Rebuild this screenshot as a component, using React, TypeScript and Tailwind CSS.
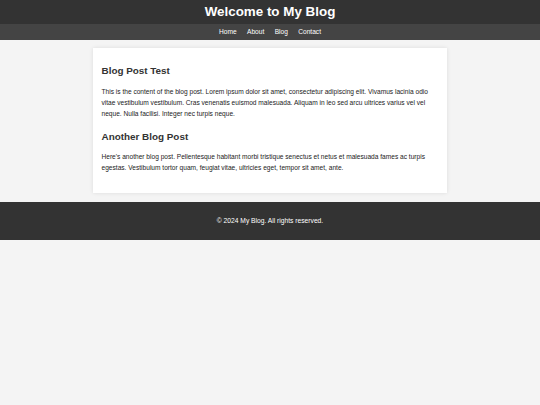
const NAV = ["Home", "About", "Blog", "Contact"];

const POSTS = [
  {
    title: "Blog Post Test",
    body: "This is the content of the blog post. Lorem ipsum dolor sit amet, consectetur adipiscing elit. Vivamus lacinia odio vitae vestibulum vestibulum. Cras venenatis euismod malesuada. Aliquam in leo sed arcu ultrices varius vel vel neque. Nulla facilisi. Integer nec turpis neque.",
  },
  {
    title: "Another Blog Post",
    body: "Here's another blog post. Pellentesque habitant morbi tristique senectus et netus et malesuada fames ac turpis egestas. Vestibulum tortor quam, feugiat vitae, ultricies eget, tempor sit amet, ante.",
  },
];

export default function App() {
  return (
    <div className="min-h-screen bg-[#f4f4f4] font-['Liberation_Sans',Arial,sans-serif] text-[#333]">
      {/* Header */}
      <header className="bg-[#333] h-[24px] flex items-center justify-center">
        <h1 className="text-white text-[13.4px] leading-none font-bold">Welcome to My Blog</h1>
      </header>

      {/* Nav */}
      <nav className="bg-[#444] h-[16px] flex items-center justify-center gap-[10.4px]">
        {NAV.map((item) => (
          <a key={item} className="text-white text-[6.6px] leading-none">
            {item}
          </a>
        ))}
      </nav>

      {/* Posts */}
      <main className="w-[354px] mx-auto mt-[8px] bg-white shadow-[0_0_4px_rgba(0,0,0,0.1)] pt-[17px] pb-[20px] px-[8.5px]">
        {POSTS.map((post, i) => (
          <article key={post.title} className={i > 0 ? "mt-[12px]" : ""}>
            <h2 className="text-[9.9px] leading-[12px] font-bold text-[#333] mb-[8.5px]">{post.title}</h2>
            <p className="text-[6.6px] leading-[11px] text-[#222]">{post.body}</p>
          </article>
        ))}
      </main>

      {/* Footer */}
      <footer className="bg-[#333] h-[38px] mt-[9px] flex items-center justify-center">
        <p className="text-white text-[6.7px] leading-none">© 2024 My Blog. All rights reserved.</p>
      </footer>
    </div>
  );
}
